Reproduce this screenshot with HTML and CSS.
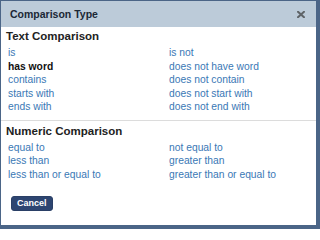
FILE: index.html
```html
<!DOCTYPE html>
<html>
<head>
<meta charset="utf-8">
<link rel="stylesheet" href="styles.css">
</head>
<body>
<div class="dialog">
  <div class="header">
    <span class="title">Comparison Type</span>
    <svg class="close" width="8" height="7" viewBox="0 0 8 7"><path d="M1 0.8 L7 6.2 M7 0.8 L1 6.2" stroke="#5f6468" stroke-width="2" stroke-linecap="square"/></svg>
  </div>
  <div class="section">
    <div class="heading">Text Comparison</div>
    <div class="grid">
      <a class="opt">is</a><a class="opt">is not</a>
      <span class="opt current">has word</span><a class="opt">does not have word</a>
      <a class="opt">contains</a><a class="opt">does not contain</a>
      <a class="opt">starts with</a><a class="opt">does not start with</a>
      <a class="opt">ends with</a><a class="opt">does not end with</a>
    </div>
  </div>
  <div class="section second">
    <div class="heading">Numeric Comparison</div>
    <div class="grid">
      <a class="opt">equal to</a><a class="opt">not equal to</a>
      <a class="opt">less than</a><a class="opt">greater than</a>
      <a class="opt">less than or equal to</a><a class="opt">greater than or equal to</a>
    </div>
    <button class="cancel">Cancel</button>
  </div>
</div>
</body>
</html>
```
FILE: styles.css
```css
html, body {
  margin: 0;
  padding: 0;
  background: #ffffff;
}
.dialog {
  box-sizing: border-box;
  width: 320px;
  height: 229px;
  border-style: solid;
  border-color: #4b6587;
  border-width: 1px 4px 4px 1px;
  background: #ffffff;
  font-family: "Liberation Sans", Arial, sans-serif;
  overflow: hidden;
}
.header {
  height: 26px;
  background: #bccbd9;
  display: flex;
  align-items: center;
  justify-content: space-between;
  padding: 0 11px 0 9px;
}
.title {
  font-size: 10.5px;
  font-weight: bold;
  color: #1b2735;
}
.close {
  display: block;
}
.section {
  padding: 2px 6px 0 5px;
}
.section.second {
  margin-top: 6px;
  border-top: 1px solid #dcdcdc;
  padding-top: 3px;
}
.heading {
  font-size: 11.5px;
  font-weight: bold;
  line-height: 14px;
  color: #222222;
}
.grid {
  display: grid;
  grid-template-columns: 161px 1fr;
  margin-top: 3px;
  padding-left: 2px;
}
.opt {
  font-size: 10.3px;
  line-height: 13.5px;
  color: #3a78b5;
  white-space: nowrap;
}
.opt.current {
  font-weight: bold;
  color: #111111;
}
.cancel {
  display: block;
  margin: 15px 0 0 5px;
  height: 15px;
  padding: 0 5px;
  border: 1px solid #2a3f66;
  border-radius: 3px;
  background: #2d4571;
  color: #ffffff;
  font-family: "Liberation Sans", Arial, sans-serif;
  font-size: 9px;
  font-weight: bold;
  line-height: 13px;
}
```
